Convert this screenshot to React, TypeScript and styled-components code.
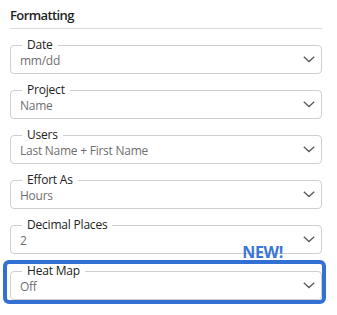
import React from "react";
import styled, { createGlobalStyle } from "styled-components";

const GlobalStyle = createGlobalStyle`
  html, body {
    margin: 0;
    padding: 0;
    background: #ffffff;
  }
  body {
    font-family: "Open Sans", "Noto Sans", sans-serif;
  }
`;

const Panel = styled.div`
  width: 312px;
  padding: 7px 0 0 10px;
`;

const Heading = styled.h3`
  margin: 0;
  font-size: 13px;
  line-height: 17px;
  font-weight: 600;
  color: #1f1f1f;
  letter-spacing: -0.6px;
  padding-bottom: 4px;
  border-bottom: 1px solid #dcdcdc;
`;

const Stack = styled.div`
  display: flex;
  flex-direction: column;
  gap: 10px;
  margin-top: 10px;
`;

const Field = styled.fieldset`
  margin: 0;
  padding: 0 9px 5px 9px;
  border: 1px solid #cfcfcf;
  border-radius: 4px;
  min-width: 0;
`;

const Legend = styled.legend`
  margin-left: 2px;
  padding: 0 5px;
  font-size: 12px;
  line-height: 12px;
  color: #222;
  letter-spacing: -0.2px;
`;

const Row = styled.div`
  display: flex;
  align-items: center;
  justify-content: space-between;
  height: 17px;
`;

const Value = styled.span`
  font-size: 12px;
  color: #707070;
  letter-spacing: -0.25px;
  padding-top: 2px;
`;

const Chevron = styled.svg`
  width: 12px;
  height: 7px;
  margin-right: -3px;
  flex: none;
`;

const Highlight = styled.div`
  position: relative;
  margin: -4px -4px 0 -7px;
  padding: 1px 0 0 3px;
  border: 4px solid #3370d3;
  border-radius: 6px;
`;

const Badge = styled.span`
  position: absolute;
  right: 39px;
  bottom: calc(100% + 4px);
  font-size: 16px;
  line-height: 16px;
  font-weight: 700;
  color: #3b76d8;
  letter-spacing: -0.3px;
`;

type Option = { label: string; value: string };

const options: Option[] = [
  { label: "Date", value: "mm/dd" },
  { label: "Project", value: "Name" },
  { label: "Users", value: "Last Name + First Name" },
  { label: "Effort As", value: "Hours" },
  { label: "Decimal Places", value: "2" },
];

const SelectField = ({ label, value }: Option) => (
  <Field>
    <Legend>{label}</Legend>
    <Row>
      <Value>{value}</Value>
      <Chevron viewBox="0 0 12 7">
        <path d="M0.8 0.8 L6 5.6 L11.2 0.8" fill="none" stroke="#5a5a5a" strokeWidth="1.3" />
      </Chevron>
    </Row>
  </Field>
);

export default function App() {
  return (
    <>
      <GlobalStyle />
      <Panel>
        <Heading>Formatting</Heading>
        <Stack>
          {options.map((o) => (
            <SelectField key={o.label} {...o} />
          ))}
          <Highlight>
            <Badge>NEW!</Badge>
            <SelectField label="Heat Map" value="Off" />
          </Highlight>
        </Stack>
      </Panel>
    </>
  );
}
